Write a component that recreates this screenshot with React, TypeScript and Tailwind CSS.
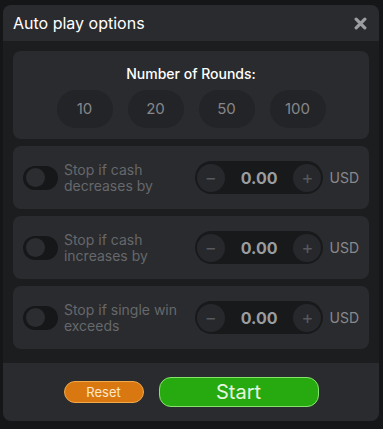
import React from 'react';

const rounds = ['10', '20', '50', '100'];
const stops = [
  ['Stop if cash', 'decreases by'],
  ['Stop if cash', 'increases by'],
  ['Stop if single win', 'exceeds'],
];

const StopRow: React.FC<{ lines: string[] }> = ({ lines }) => (
  <div className="h-[63px] rounded-lg bg-[#2a2b2e] flex items-center px-[10px]">
    <div className="w-[35px] h-[24px] rounded-full bg-[#161719] flex items-center pl-[3px]">
      <div className="w-[19px] h-[19px] rounded-full bg-[#2c2d30]" />
    </div>
    <div className="w-[137px] pl-[6px] text-[14px] leading-[16px] text-[#66686b]">
      {lines.map((l) => (
        <div key={l}>{l}</div>
      ))}
    </div>
    <div className="w-[129px] h-[33px] rounded-full bg-[#18191b] flex items-center justify-between px-[2px]">
      <div className="w-[28px] h-[28px] rounded-full bg-[#27282b] flex items-center justify-center text-[#57595c] text-[18px] leading-none">−</div>
      <span className="text-[16px] font-bold text-[#9b9c9e]">0.00</span>
      <div className="w-[28px] h-[28px] rounded-full bg-[#27282b] flex items-center justify-center text-[#57595c] text-[18px] leading-none">+</div>
    </div>
    <span className="ml-[6px] text-[14px] text-[#88898c]">USD</span>
  </div>
);

export default function App() {
  return (
    <div className="w-[383px] h-[429px] bg-[#151617] pt-[5px] px-[3px]" style={{ fontFamily: 'Inter, "Noto Sans", sans-serif' }}>
      <div className="w-[376px] rounded-lg overflow-hidden bg-[#1c1d1f]">
        <div className="h-[36px] bg-[#2a2b2e] flex items-center justify-between pl-[10px] pr-[12px]">
          <span className="text-[16px] text-white">Auto play options</span>
          <svg width="13" height="13" viewBox="0 0 12 12">
            <path d="M2 2L10 10M10 2L2 10" stroke="#9a9da1" strokeWidth="3" strokeLinecap="round" />
          </svg>
        </div>
        <div className="px-[10px] pt-[10px] pb-[14px] flex flex-col gap-[7px]">
          <div className="h-[88px] rounded-lg bg-[#2a2b2e] flex flex-col items-center pt-[14px]">
            <span className="text-[14px] font-medium text-white leading-[18px]">Number of Rounds:</span>
            <div className="flex gap-[15px] mt-[7px]">
              {rounds.map((r) => (
                <div key={r} className="w-[56px] h-[38px] rounded-full bg-[#232427] flex items-center justify-center text-[15px] text-[#86878a]">
                  {r}
                </div>
              ))}
            </div>
          </div>
          {stops.map((s) => (
            <StopRow key={s.join(' ')} lines={s} />
          ))}
        </div>
        <div className="h-[58px] bg-[#2a2b2e] flex items-center justify-center gap-[15px]">
          <button className="w-[80px] h-[22px] rounded-full bg-[#d97810] border border-[#f2a94a] text-[13px] text-[#fbe7c8] leading-none">Reset</button>
          <button className="w-[160px] h-[30px] rounded-xl bg-[#27a910] border border-[#86e46e] text-[20px] text-[#e6f7e0] leading-none">Start</button>
        </div>
      </div>
    </div>
  );
}
